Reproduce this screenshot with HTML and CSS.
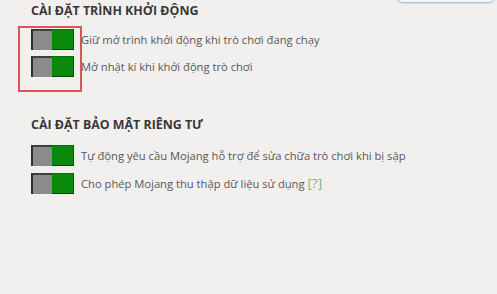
FILE: index.html
```html
<!DOCTYPE html>
<html lang="vi">
<head>
<meta charset="utf-8">
<link rel="stylesheet" href="styles.css">
</head>
<body>
<div class="topctl"><span class="topctl-dot"></span></div>
<main class="page">
  <section class="section">
    <h2 class="heading">CÀI ĐẶT TRÌNH KHỞI ĐỘNG</h2>
    <div class="options">
      <div class="row"><span class="toggle"><span class="off"></span><span class="on"></span></span><span class="label">Giữ mở trình khởi động khi trò chơi đang chạy</span></div>
      <div class="row"><span class="toggle"><span class="off"></span><span class="on"></span></span><span class="label">Mở nhật kí khi khởi động trò chơi</span></div>
      <div class="highlight"></div>
    </div>
  </section>
  <section class="section second">
    <h2 class="heading">CÀI ĐẶT BẢO MẬT RIÊNG TƯ</h2>
    <div class="options">
      <div class="row"><span class="toggle"><span class="off"></span><span class="on"></span></span><span class="label">Tự động yêu cầu Mojang hỗ trợ để sửa chữa trò chơi khi bị sập</span></div>
      <div class="row"><span class="toggle"><span class="off"></span><span class="on"></span></span><span class="label">Cho phép Mojang thu thập dữ liệu sử dụng <span class="help">[?]</span></span></div>
    </div>
  </section>
</main>
</body>
</html>
```
FILE: styles.css
```css
html, body {
  margin: 0;
  padding: 0;
  background: #f2f0ef;
  width: 497px;
  height: 294px;
  overflow: hidden;
  position: relative;
  font-family: "Open Sans", "Noto Sans", sans-serif;
}
.topctl {
  position: absolute;
  left: 397px;
  top: -18px;
  width: 96px;
  height: 19px;
  border: 1px solid #a9c3d6;
  border-radius: 6px;
  background: #f5f8fa;
  box-shadow: 0 1px 1px rgba(140,170,200,0.3);
}
.topctl-dot {
  position: absolute;
  left: -1px;
  top: 3px;
  width: 14px;
  height: 14px;
  border-radius: 50%;
  background: #6ea2c8;
}
.page {
  padding: 2px 0 0 31px;
  display: flex;
  flex-direction: column;
}
.section.second {
  margin-top: 39px;
}
.heading {
  margin: 0 0 9px 0;
  font-size: 12.4px;
  line-height: 18px;
  font-weight: 700;
  color: #383838;
  letter-spacing: 0;
}
.second .heading {
  margin-bottom: 11px;
}
.options {
  position: relative;
  display: flex;
  flex-direction: column;
  gap: 6px;
}
.second .options {
  gap: 7px;
}
.row {
  display: flex;
  align-items: center;
  gap: 7px;
  height: 21px;
}
.toggle {
  display: flex;
  width: 43px;
  height: 21px;
  flex: none;
}
.off {
  width: 21px;
  height: 21px;
  box-sizing: border-box;
  background: #8b8b8a;
  border-top: 2px solid #3e3e3e;
  border-left: 2px solid #2e2e2e;
}
.on {
  width: 22px;
  height: 21px;
  box-sizing: border-box;
  background: #098a0c;
  border-top: 1px solid #0a6e0c;
  border-right: 1px solid #07530a;
  border-bottom: 1px solid #06440a;
}
.label {
  font-size: 11.2px;
  color: #575757;
  white-space: nowrap;
  line-height: 14px;
}
.help {
  color: #7db56a;
  font-size: 13.5px;
}
.highlight {
  position: absolute;
  left: -13px;
  top: -3px;
  width: 60px;
  height: 62px;
  border: 2px solid #d9555c;
  pointer-events: none;
}
```
